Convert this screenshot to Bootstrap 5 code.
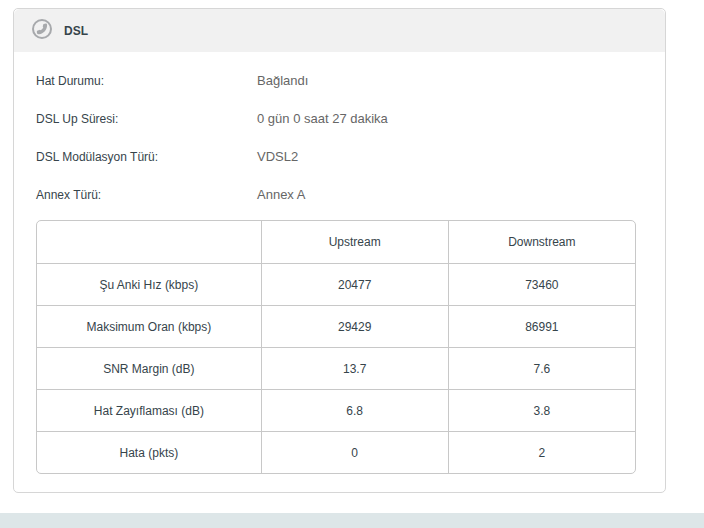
<!DOCTYPE html>
<html lang="tr">
<head>
<meta charset="utf-8">
<meta name="viewport" content="width=device-width, initial-scale=1">
<title>DSL</title>
<link href="https://cdn.jsdelivr.net/npm/bootstrap@5.3.0/dist/css/bootstrap.min.css" rel="stylesheet">
<style>
  body { font-family: "Liberation Sans", Arial, sans-serif; font-size: 12px; line-height: 18px; color: #36444b; }
  .page-main { padding: 8px 38px 20px 13px; }
  .panel { --bs-card-border-color: #d6d6d6; --bs-card-border-radius: 5px; --bs-card-inner-border-radius: 4px; --bs-card-color: #36444b; }
  .panel-head { background: #f1f1f1; height: 43px; padding: 0 18px 3px; gap: 12px; }
  .panel-head h2 { font-size: 12px; line-height: 18px; padding-top: 3px; }
  .panel-content { padding: 10px 29px 18px 22px; }
  .info-list { grid-template-columns: 221px 1fr; grid-auto-rows: 38px; margin-bottom: 6px; }
  .info-list dd { font-size: 13px; color: #666; }
  .stats-frame { border: 1px solid #c8c8c8; border-radius: 5px; }
  .stats { --bs-table-color: #36444b; --bs-table-bg: transparent; table-layout: fixed; border-color: #c8c8c8; }
  .stats > :not(caption) > * > * { height: 42px; padding: 0 8px; border-width: 0 1px 1px 0; }
  .stats > tbody > tr > * { padding-top: 2px; }
  .stats tr > :last-child { border-right-width: 0; }
  .stats tbody tr:last-child > * { border-bottom-width: 0; }
  .col-name { width: 37.5%; }
  .page-foot { background: #dde6e8; min-height: 15px; }
</style>
<script src="https://cdn.jsdelivr.net/npm/bootstrap@5.3.0/dist/js/bootstrap.bundle.min.js" defer></script>
</head>
<body class="d-flex flex-column min-vh-100">
<main class="page-main">
  <section class="card panel">
    <header class="panel-head d-flex align-items-center rounded-top">
      <svg width="20" height="20" viewBox="0 0 20 20" aria-hidden="true">
        <circle cx="10" cy="10" r="9" fill="none" stroke="#a7a9ac" stroke-width="2"/>
        <path d="M11.8 5.1 L13.8 4.6 Q15 4.5 15.1 5.8 C15.3 10.6 11.7 14.9 7 15.3 Q5.3 15.4 5 14.2 L4.8 12.8 Q4.8 11.9 5.7 11.6 L7.5 10.9 Q8.1 10.7 8.7 11.2 C9.9 10.5 10.8 9.5 11.3 8.4 Q10.7 8 10.8 7.3 L11.1 5.9 Q11.2 5.3 11.8 5.1Z" fill="#a7a9ac"/>
      </svg>
      <h2 class="mb-0 fw-bold">DSL</h2>
    </header>
    <div class="panel-content">
      <dl class="info-list d-grid align-items-center">
        <dt class="fw-normal">Hat Durumu:</dt><dd class="m-0">Bağlandı</dd>
        <dt class="fw-normal">DSL Up Süresi:</dt><dd class="m-0">0 gün 0 saat 27 dakika</dd>
        <dt class="fw-normal">DSL Modülasyon Türü:</dt><dd class="m-0">VDSL2</dd>
        <dt class="fw-normal">Annex Türü:</dt><dd class="m-0">Annex A</dd>
      </dl>
      <div class="stats-frame">
        <table class="table stats text-center m-0">
          <colgroup><col class="col-name"><col><col></colgroup>
          <thead class="align-middle">
            <tr><td></td><th scope="col" class="fw-normal">Upstream</th><th scope="col" class="fw-normal">Downstream</th></tr>
          </thead>
          <tbody class="align-middle">
            <tr><th scope="row" class="fw-normal">Şu Anki Hız (kbps)</th><td>20477</td><td>73460</td></tr>
            <tr><th scope="row" class="fw-normal">Maksimum Oran (kbps)</th><td>29429</td><td>86991</td></tr>
            <tr><th scope="row" class="fw-normal">SNR Margin (dB)</th><td>13.7</td><td>7.6</td></tr>
            <tr><th scope="row" class="fw-normal">Hat Zayıflaması (dB)</th><td>6.8</td><td>3.8</td></tr>
            <tr><th scope="row" class="fw-normal">Hata (pkts)</th><td>0</td><td>2</td></tr>
          </tbody>
        </table>
      </div>
    </div>
  </section>
</main>
<footer class="page-foot flex-grow-1"></footer>
</body>
</html>
